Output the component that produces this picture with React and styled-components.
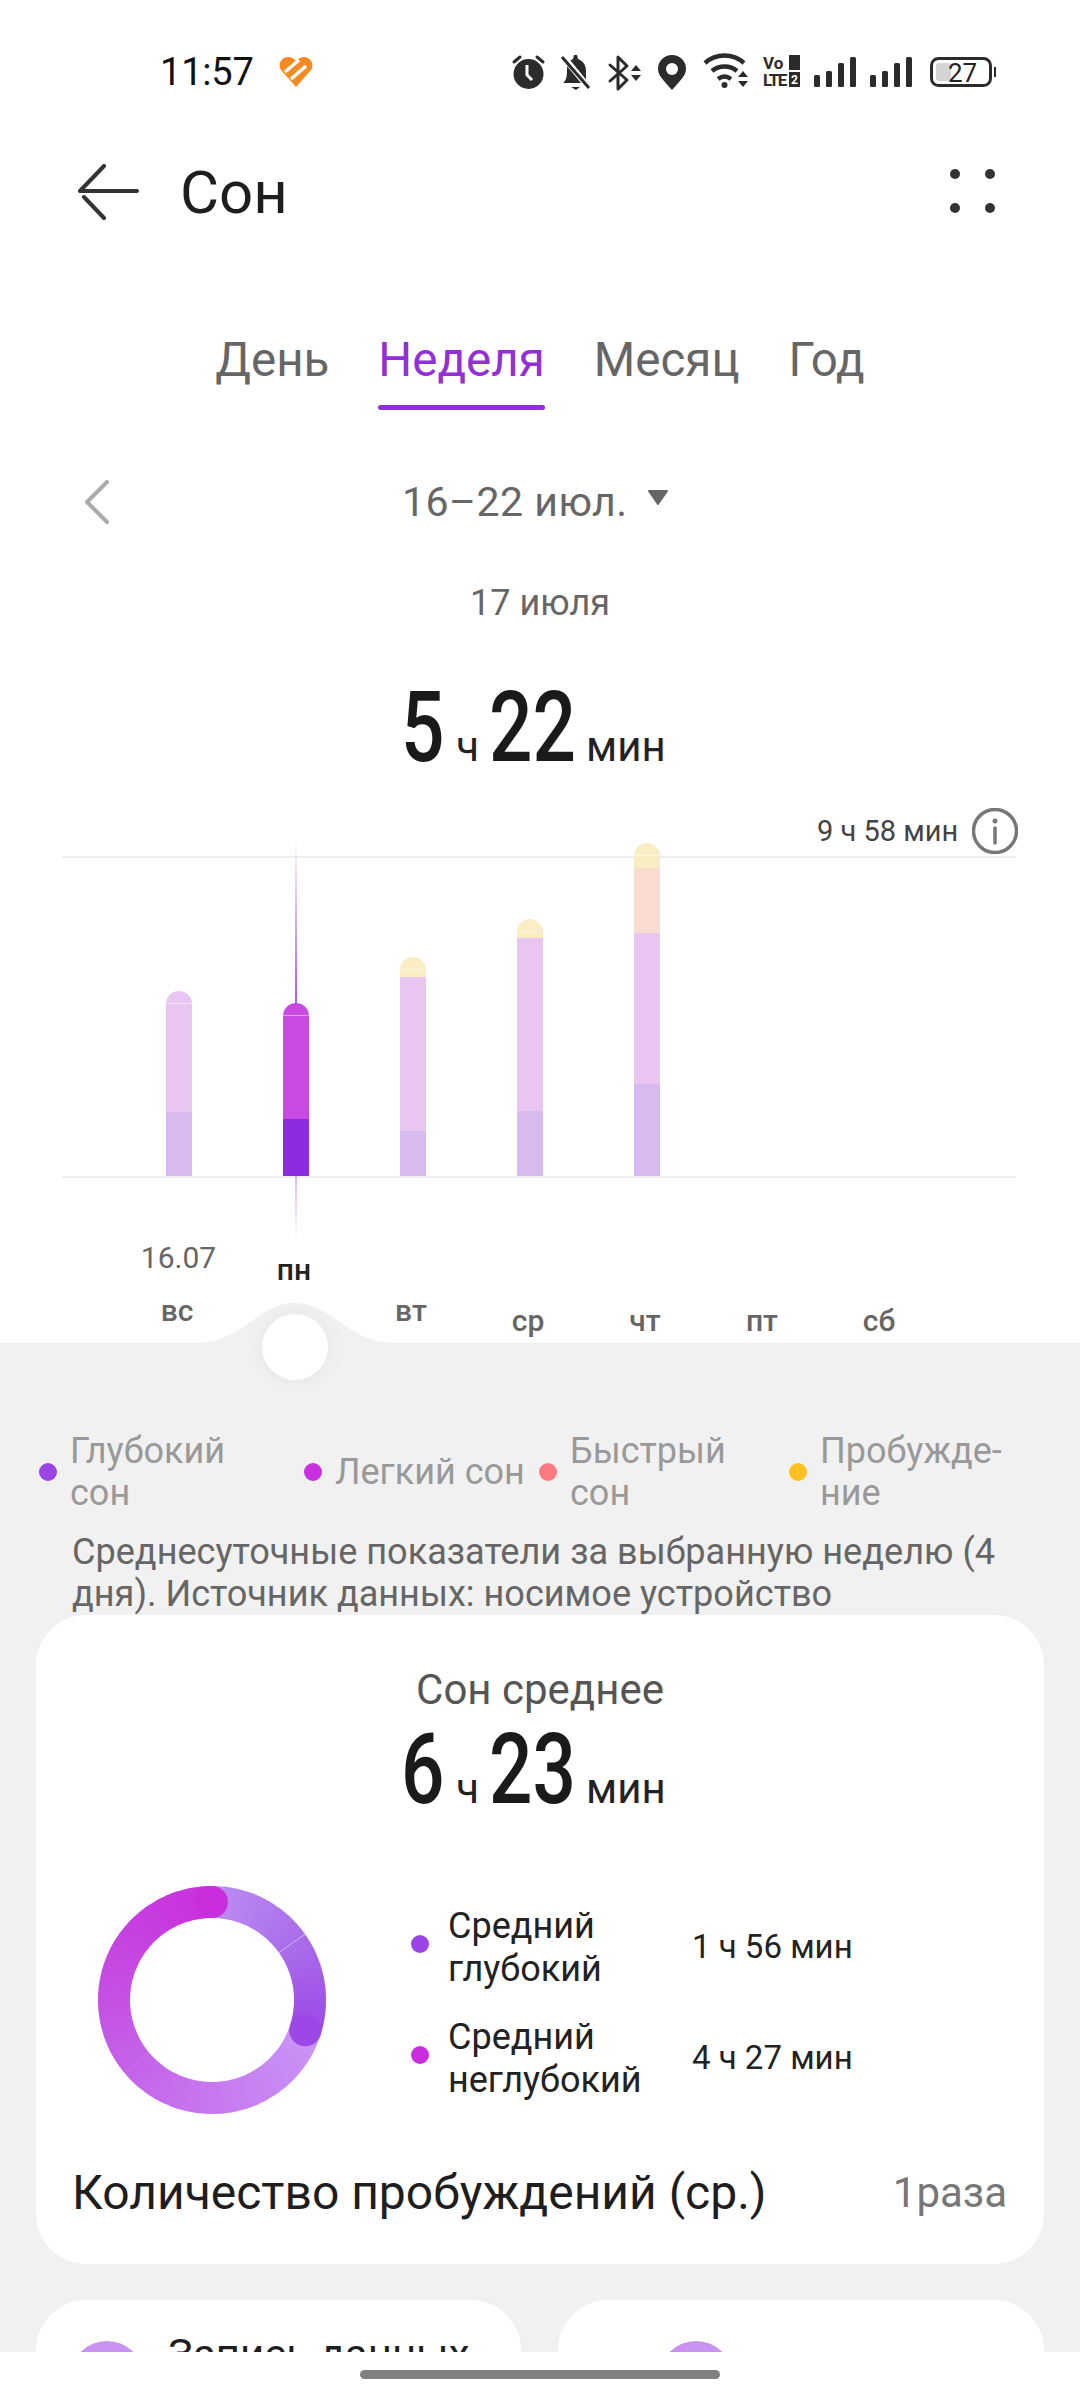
import styled, { createGlobalStyle } from 'styled-components'

const GlobalStyle = createGlobalStyle`
  html, body { margin: 0; padding: 0; background: #fff; }
  body { font-family: Roboto, "Noto Sans", "Liberation Sans", sans-serif; }
  * { box-sizing: border-box; }
`

const Page = styled.div`
  position: relative;
  width: 1080px;
  height: 2400px;
  overflow: hidden;
  background: #fff;
  color: #1c1c1c;
`

const StatusBar = styled.div`
  height: 144px;
  padding: 0 84px 0 160px;
  display: flex;
  align-items: center;
  justify-content: space-between;
`
const StatusLeft = styled.div`
  display: flex;
  align-items: center;
  gap: 25px;
`
const Time = styled.span`
  font-size: 38px;
  color: #111;
  letter-spacing: -0.2px;
`
const StatusIcons = styled.svg`
  display: block;
`

const Header = styled.div`
  height: 96px;
  padding: 0 84px 0 77px;
  display: flex;
  align-items: center;
`
const Title = styled.h1`
  margin: 0 0 0 41px;
  font-size: 60px;
  font-weight: 400;
  color: #1e1e1e;
  flex: 1;
`

const Tabs = styled.div`
  margin-top: 90px;
  height: 80px;
  display: flex;
  justify-content: center;
  gap: 49px;
`
const Tab = styled.div`
  position: relative;
  height: 80px;
  line-height: 60px;
  font-size: 47.5px;
  color: ${p => (p.$active ? '#9230d8' : '#666')};
  &::after {
    content: '';
    display: ${p => (p.$active ? 'block' : 'none')};
    position: absolute;
    left: 0;
    right: 0;
    bottom: 0;
    height: 5px;
    border-radius: 3px;
    background: #9230d8;
  }
`

const DateRow = styled.div`
  margin-top: 62px;
  height: 60px;
  padding: 0 0 0 84px;
  display: flex;
  align-items: center;
`
const DateLabel = styled.div`
  margin-left: 292px;
  font-size: 41px;
  color: #666;
  letter-spacing: 0.5px;
`
const SubDate = styled.div`
  margin-top: 49px;
  text-align: center;
  font-size: 36px;
  line-height: 44px;
  color: #666;
`

const BigValue = styled.div`
  display: flex;
  justify-content: center;
  align-items: baseline;
  height: 110px;
  margin-top: ${p => p.$top}px;
  padding-right: 3px;
  line-height: 110px;
`
const BigDigits = styled.span`
  display: inline-block;
  width: ${p => p.$count * 42}px;
  font-size: 98px;
  font-weight: 500;
  color: #1a1a1a;
  transform: scaleX(0.78);
  transform-origin: left center;
  white-space: nowrap;
`
const BigUnit = styled.span`
  font-size: 42px;
  color: #222;
  margin: 0 10px 0 13px;
`

const Chart = styled.div`
  position: relative;
  height: 543px;
  margin-top: 17px;
`
const GridLine = styled.div`
  position: absolute;
  left: 62px;
  right: 64px;
  top: ${p => p.$top}px;
  height: 2px;
  background: #eeeeee;
`
const MaxLabel = styled.div`
  position: absolute;
  top: 8px;
  left: 817px;
  display: flex;
  align-items: center;
  gap: 14px;
  font-size: 29px;
  color: #444;
`
const InfoIcon = styled.svg`
  display: block;
`
const Columns = styled.div`
  position: relative;
  display: grid;
  grid-template-columns: repeat(7, 117px);
  padding-left: 120px;
`
const Column = styled.div`
  position: relative;
  display: flex;
  flex-direction: column;
  align-items: center;
`
const BarSlot = styled.div`
  height: 376px;
  display: flex;
  align-items: flex-end;
`
const Bar = styled.div`
  position: relative;
  width: 26px;
  border-radius: 13px 13px 0 0;
  overflow: hidden;
  display: flex;
  flex-direction: column;
`
const Segment = styled.div`
  height: ${p => p.$h}px;
  background: ${p => p.$color};
`
const Seam = styled.div`
  position: absolute;
  left: 0;
  right: 0;
  top: 12px;
  height: 1px;
  background: rgba(255, 255, 255, 0.45);
`
const SelectLine = styled.div`
  position: absolute;
  left: 57.5px;
  top: 37px;
  width: 2px;
  height: 406px;
  background: linear-gradient(
    to bottom,
    rgba(168, 96, 240, 0) 0%,
    #a860f0 40%,
    #a860f0 70%,
    #e3d0f7 88%,
    rgba(227, 208, 247, 0) 100%
  );
`
const DateTick = styled.div`
  margin-top: 64px;
  font-size: 30px;
  line-height: 36px;
  color: #666;
`
const DayLabel = styled.div`
  margin-top: ${p => p.$top}px;
  margin-right: 3px;
  font-size: 30px;
  line-height: 34px;
  font-weight: 500;
  color: ${p => (p.$active ? '#222' : '#666')};
`
const Bump = styled.svg`
  position: absolute;
  left: 195px;
  bottom: 0;
  display: block;
`
const Handle = styled.div`
  position: absolute;
  left: 262px;
  top: 514px;
  width: 66px;
  height: 66px;
  border-radius: 50%;
  background: #fff;
  box-shadow: 0 0 20px rgba(0, 0, 0, 0.06);
  z-index: 2;
`

const Lower = styled.div`
  background: #f1f1f1;
  height: 1100px;
  padding-top: 87px;
`
const Legend = styled.div`
  display: grid;
  grid-template-columns: 265px 235px 250px 230px;
  padding-left: 39px;
`
const LegendItem = styled.div`
  display: flex;
  align-items: center;
  gap: 13px;
  font-size: 36px;
  line-height: 42px;
  color: #999;
  white-space: nowrap;
`
const Dot = styled.span`
  flex: none;
  width: 18px;
  height: 18px;
  border-radius: 50%;
  background: ${p => p.$color};
`
const Note = styled.p`
  margin: 17px 0 0;
  padding: 0 70px 0 72px;
  font-size: 36.1px;
  line-height: 42px;
  color: #666;
`

const Card = styled.section`
  background: #fff;
  border-radius: 50px;
`
const SummaryCard = styled(Card)`
  margin: 0 36px;
  height: 649px;
  padding-top: 50px;
`
const CardTitle = styled.div`
  text-align: center;
  font-size: 42px;
  line-height: 50px;
  color: #555;
`
const DonutRow = styled.div`
  margin-top: 61px;
  padding-left: 62px;
  display: flex;
  align-items: center;
`
const AvgList = styled.div`
  margin: 4px 0 0 85px;
  display: flex;
  flex-direction: column;
  gap: 23px;
`
const AvgRow = styled.div`
  display: flex;
  align-items: center;
`
const AvgDot = styled(Dot)`
  margin-bottom: 6px;
`
const AvgName = styled.div`
  width: 244px;
  margin-left: 19px;
  padding-top: 2px;
  font-size: 36px;
  line-height: 43px;
  color: #222;
`
const AvgValue = styled.div`
  font-size: 33px;
  color: #222;
`
const WakeRow = styled.div`
  margin-top: 50px;
  padding: 0 37px 0 36px;
  display: flex;
  justify-content: space-between;
  align-items: center;
`
const WakeName = styled.div`
  font-size: 48px;
  color: #1e1e1e;
`
const WakeValue = styled.div`
  font-size: 42px;
  color: #777;
`

const TileRow = styled.div`
  margin: 36px 36px 0;
  display: grid;
  grid-template-columns: 485px 486px;
  gap: 37px;
`
const Tile = styled(Card)`
  height: 200px;
  padding: 30px 0 0 ${p => p.$pad}px;
  display: flex;
  gap: 24px;
`
const TileIcon = styled.div`
  flex: none;
  width: 74px;
  height: 74px;
  margin-top: 11px;
  border-radius: 50%;
  background: #ca92f0;
`
const TileText = styled.div`
  font-size: 42px;
  line-height: 50px;
  color: #1e1e1e;
`

const NavBar = styled.div`
  position: absolute;
  left: 0;
  right: 0;
  bottom: 0;
  height: 48px;
  background: #fff;
`
const NavPill = styled.div`
  position: absolute;
  left: 360px;
  top: 18px;
  width: 360px;
  height: 9px;
  border-radius: 5px;
  background: #808080;
`

const IC = '#2b2b2b'

const StatusGlyphs = () => (
  <StatusIcons width="486" height="40" viewBox="0 0 486 40">
    {/* alarm */}
    <g transform="translate(3 2)">
      <circle cx="15.500" cy="20" r="15" fill={IC} />
      <path d="M14 11v10l5 5" stroke="#fff" strokeWidth="3" fill="none" />
      <path d="M1 8l6-5M30 8l-6-5" stroke={IC} strokeWidth="3" strokeLinecap="round" />
    </g>
    {/* muted bell */}
    <g transform="translate(51 2)">
      <path d="M2 29c3-2 4-6 4-13 0-6 3-10 6-11l1-4h3l1 4c5 2 8 6 8 12v9l3 3H2z" fill={IC} />
      <path d="M10 33h9l-4 3z" fill={IC} />
      <path d="M1 1l27 33" stroke="#fff" strokeWidth="6" />
      <path d="M1 3l27 31" stroke={IC} strokeWidth="3" />
    </g>
    {/* bluetooth */}
    <g transform="translate(98 2)">
      <path d="M2 11l17 15-9 9V3l9 9L2 27" fill="none" stroke={IC} strokeWidth="3" strokeLinejoin="round" strokeLinecap="round" />
      <path d="M23 17h10l-5-6zM23 21h10l-5 6z" fill={IC} />
    </g>
    {/* pin */}
    <g transform="translate(148 3)">
      <path d="M14 35C5 25 0 20 0 14a14 14 0 0 1 28 0c0 6-5 11-14 21z" fill={IC} />
      <circle cx="14" cy="14" r="6" fill="#fff" />
    </g>
    {/* wifi */}
    <g transform="translate(194 1)" fill="none" stroke={IC} strokeWidth="4.500">
      <path d="M1 10c11-10 28-10 39 0" />
      <path d="M8 18c7-6 18-6 25 0" />
      <path d="M14 26c4-3 9-3 13 0" />
      <circle cx="20.500" cy="32" r="3" fill={IC} stroke="none" />
      <path d="M34 24h10l-5-6zM34 28h10l-5 6z" fill={IC} stroke="none" />
    </g>
    {/* volte text */}
    <g transform="translate(253 3)" fill={IC} fontFamily="Roboto, sans-serif" fontWeight="700">
      <text x="0" y="14" fontSize="17">Vo</text>
      <rect x="26" y="0" width="11" height="15" />
      <text x="0" y="31" fontSize="17" letterSpacing="-1.500">LTE</text>
      <rect x="26" y="17" width="11" height="15" />
      <text x="28" y="29" fontSize="12" fill="#fff">2</text>
    </g>
    {/* signals */}
    {[304, 360].map(x => (
      <g key={x} transform={`translate(${x} 0)`} fill={IC}>
        <rect x="0" y="23" width="6" height="12" rx="1.500" />
        <rect x="12" y="19" width="6" height="16" rx="1.500" />
        <rect x="24" y="11" width="6" height="24" rx="1.500" />
        <rect x="36" y="5" width="6" height="30" rx="1.500" />
      </g>
    ))}
    {/* battery */}
    <g transform="translate(420 0)">
      <rect x="1.500" y="6.500" width="59" height="27" rx="7" fill="none" stroke={IC} strokeWidth="3" />
      <rect x="6" y="11" width="15" height="18" rx="3" fill="#d4d4d4" />
      <rect x="64" y="15" width="2" height="10" fill={IC} />
      <text x="18" y="30" fontSize="26" fill="#222" fontFamily="Roboto, sans-serif">27</text>
    </g>
  </StatusIcons>
)

const arc = (a0, a1, r, cx, cy) => {
  const p = a => [cx + r * Math.sin((a * Math.PI) / 180), cy - r * Math.cos((a * Math.PI) / 180)]
  const [x0, y0] = p(a0)
  const [x1, y1] = p(a1)
  return `M${x0} ${y0}A${r} ${r} 0 0 1 ${x1} ${y1}`
}

const mix = (stops, t) => {
  let i = 0
  while (i < stops.length - 2 && t > stops[i + 1][0]) i++
  const [t0, c0] = stops[i]
  const [t1, c1] = stops[i + 1]
  const k = (t - t0) / (t1 - t0)
  return `rgb(${c0.map((v, n) => Math.round(v + (c1[n] - v) * k)).join(',')})`
}

const DEEP_STOPS = [[0, [188, 140, 240]], [55, [170, 108, 234]], [108, [155, 72, 230]]]
const LIGHT_STOPS = [
  [108, [201, 148, 246]],
  [180, [198, 120, 238]],
  [270, [196, 80, 228]],
  [360, [201, 46, 220]]
]

const Donut = () => {
  const c = 114, r = 98, w = 32
  const pieces = []
  for (let a = 108; a < 360; a += 3) {
    pieces.push(<path key={`l${a}`} d={arc(a, Math.min(a + 3.4, 360), r, c, c)} stroke={mix(LIGHT_STOPS, a)} strokeWidth={w} fill="none" />)
  }
  for (let a = 0; a < 108; a += 3) {
    pieces.push(<path key={`d${a}`} d={arc(a, a + 3.4, r, c, c)} stroke={mix(DEEP_STOPS, a)} strokeWidth={w} fill="none" />)
  }
  const rad = (108 * Math.PI) / 180
  const sa = (54.7 * Math.PI) / 180
  return (
    <svg width="228" height="228" viewBox="0 0 228 228" style={{ flex: 'none' }}>
      {pieces}
      <circle cx={c + r * Math.sin(rad)} cy={c - r * Math.cos(rad)} r={w / 2} fill="rgb(155,72,230)" />
      <circle cx={c} cy={c - r} r={w / 2} fill="rgb(201,46,220)" />
      <line
        x1={c + 82 * Math.sin(sa)} y1={c - 82 * Math.cos(sa)}
        x2={c + 114 * Math.sin(sa)} y2={c - 114 * Math.cos(sa)}
        stroke="#fff" strokeOpacity="0.5" strokeWidth="1"
      />
    </svg>
  )
}

const DEEP = '#d7bbef'
const LIGHT = '#e9c5f1'
const YELLOW = '#f8edc3'
const PEACH = '#f9dbd0'

const days = [
  { day: 'вс', tick: '16.07', labelTop: 18, segments: [[LIGHT, 121], [DEEP, 64]] },
  { day: 'пн', active: true, labelTop: 77, segments: [['#c84ae3', 116], ['#8c2be0', 57]] },
  { day: 'вт', labelTop: 118, segments: [[YELLOW, 20], [LIGHT, 154], [DEEP, 45]] },
  { day: 'ср', labelTop: 128, segments: [[YELLOW, 19], [LIGHT, 173], [DEEP, 65]] },
  { day: 'чт', labelTop: 128, segments: [[YELLOW, 25], [PEACH, 65], [LIGHT, 151], [DEEP, 92]] },
  { day: 'пт', labelTop: 128, segments: [] },
  { day: 'сб', labelTop: 128, segments: [] }
]

const legend = [
  { color: '#9b45e6', lines: ['Глубокий', 'сон'] },
  { color: '#c92fde', lines: ['Легкий сон'] },
  { color: '#ff7a80', lines: ['Быстрый', 'сон'] },
  { color: '#ffc020', lines: ['Пробужде-', 'ние'] }
]

const Duration = ({ h, m, top }) => (
  <BigValue $top={top}>
    <BigDigits $count={String(h).length}>{h}</BigDigits>
    <BigUnit>ч</BigUnit>
    <BigDigits $count={String(m).length}>{m}</BigDigits>
    <BigUnit>мин</BigUnit>
  </BigValue>
)

export default function App() {
  return (
    <Page>
      <GlobalStyle />
      <StatusBar>
        <StatusLeft>
          <Time>11:57</Time>
          <svg width="34" height="30" viewBox="0 0 34 30">
            <path d="M17 30L2 13C-2 7 3 0 9 0c4 0 6 2 8 4 2-2 4-4 8-4 6 0 11 7 7 13z" fill="#f58a20" />
            <path d="M6 15L20 3M12 22L27 9" stroke="#fff" strokeWidth="3.500" />
          </svg>
        </StatusLeft>
        <StatusGlyphs />
      </StatusBar>

      <Header>
        <svg width="62" height="56" viewBox="0 0 62 56" style={{ flex: 'none' }}>
          <path d="M3 27h57M27 2L3 27M7 33l20 21" fill="none" stroke="#333" strokeWidth="4" strokeLinecap="round" />
        </svg>
        <Title>Сон</Title>
        <svg width="46" height="46" viewBox="0 0 46 46" style={{ flex: 'none' }}>
          <circle cx="5" cy="5" r="5" fill="#333" />
          <circle cx="40" cy="5" r="5" fill="#333" />
          <circle cx="5" cy="39" r="5" fill="#333" />
          <circle cx="40" cy="39" r="5" fill="#333" />
        </svg>
      </Header>

      <Tabs>
        <Tab>День</Tab>
        <Tab $active>Неделя</Tab>
        <Tab>Месяц</Tab>
        <Tab>Год</Tab>
      </Tabs>

      <DateRow>
        <svg width="26" height="44" viewBox="0 0 26 44" style={{ flex: 'none' }}>
          <path d="M23 2L3 22l20 20" fill="none" stroke="#aaa" strokeWidth="4" strokeLinecap="round" strokeLinejoin="round" />
        </svg>
        <DateLabel>16–22 июл.</DateLabel>
        <svg width="24" height="16" viewBox="0 0 24 16" style={{ flex: 'none', marginLeft: 18, marginBottom: 8 }}>
          <path d="M3 1h18l-9 13z" fill="#666" stroke="#666" strokeWidth="2" strokeLinejoin="round" />
        </svg>
      </DateRow>
      <SubDate>17 июля</SubDate>
      <Duration h={5} m={22} top={48} />

      <Chart>
        <GridLine $top={56} />
        <GridLine $top={376} />
        <MaxLabel>
          9 ч 58 мин
          <InfoIcon width="46" height="46" viewBox="0 0 46 46">
            <circle cx="23" cy="23" r="21.500" fill="none" stroke="#777" strokeWidth="3.500" />
            <circle cx="23" cy="13" r="2.500" fill="#777" />
            <path d="M23 20v15" stroke="#777" strokeWidth="3.500" strokeLinecap="round" />
          </InfoIcon>
        </MaxLabel>
        <Columns>
          {days.map(d => (
            <Column key={d.day}>
              {d.active && <SelectLine />}
              <BarSlot>
                {d.segments.length > 0 && (
                  <Bar>
                    {d.segments.map(([color, h], i) => (
                      <Segment key={i} $color={color} $h={h} />
                    ))}
                    <Seam />
                  </Bar>
                )}
              </BarSlot>
              {d.tick && <DateTick>{d.tick}</DateTick>}
              <DayLabel $top={d.labelTop} $active={d.active}>{d.day}</DayLabel>
            </Column>
          ))}
        </Columns>
        <Bump width="200" height="40" viewBox="0 0 200 40">
          <path d="M0 40C48 40 62 0 100 0s52 40 100 40z" fill="#f1f1f1" />
        </Bump>
        <Handle />
      </Chart>

      <Lower>
        <Legend>
          {legend.map(item => (
            <LegendItem key={item.lines[0]}>
              <Dot $color={item.color} />
              <span>
                {item.lines.map(line => (
                  <div key={line}>{line}</div>
                ))}
              </span>
            </LegendItem>
          ))}
        </Legend>
        <Note>Среднесуточные показатели за выбранную неделю (4 дня). Источник данных: носимое устройство</Note>

        <SummaryCard>
          <CardTitle>Сон среднее</CardTitle>
          <Duration h={6} m={23} top={0} />
          <DonutRow>
            <Donut />
            <AvgList>
              <AvgRow>
                <AvgDot $color="#9b45e6" />
                <AvgName>Средний<br />глубокий</AvgName>
                <AvgValue>1 ч 56 мин</AvgValue>
              </AvgRow>
              <AvgRow>
                <AvgDot $color="#c92fde" />
                <AvgName>Средний<br />неглубокий</AvgName>
                <AvgValue>4 ч 27 мин</AvgValue>
              </AvgRow>
            </AvgList>
          </DonutRow>
          <WakeRow>
            <WakeName>Количество пробуждений (ср.)</WakeName>
            <WakeValue>1раза</WakeValue>
          </WakeRow>
        </SummaryCard>

        <TileRow>
          <Tile $pad={34}>
            <TileIcon />
            <TileText>Запись данных</TileText>
          </Tile>
          <Tile $pad={101}>
            <TileIcon />
          </Tile>
        </TileRow>
      </Lower>

      <NavBar>
        <NavPill />
      </NavBar>
    </Page>
  )
}
